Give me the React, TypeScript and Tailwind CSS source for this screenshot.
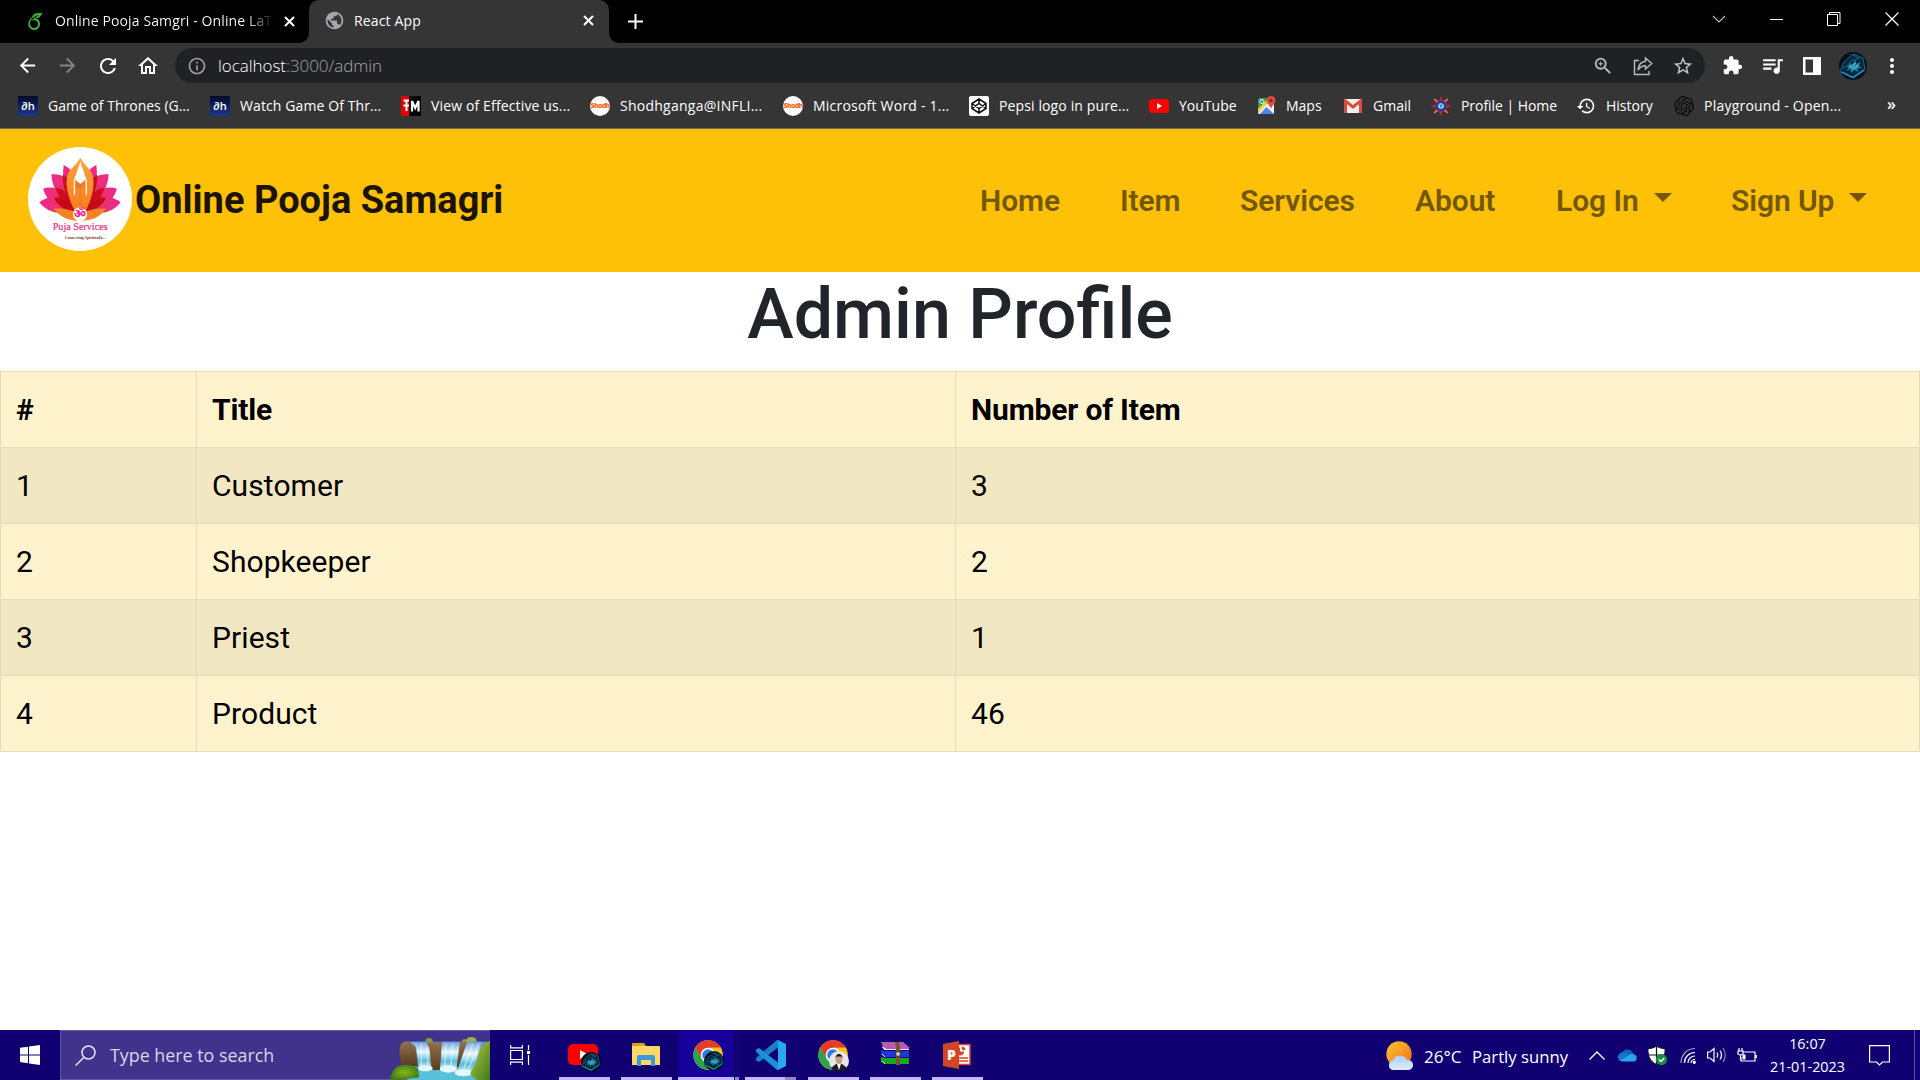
import React from "react";
import {
  MdArrowBack,
  MdArrowForward,
  MdRefresh,
  MdOutlineHome,
  MdInfoOutline,
  MdZoomIn,
  MdStarBorder,
  MdExtension,
  MdQueueMusic,
  MdMoreVert,
  MdHistory,
  MdPublic,
} from "react-icons/md";
import { SiOverleaf, SiOpenai } from "react-icons/si";

/* ---------- small drawings ---------- */

function Cross({ size = 11, width = 2 }: { size?: number; width?: number }) {
  return (
    <svg width={size} height={size} viewBox="0 0 11 11" stroke="#fff" strokeWidth={width} fill="none">
      <path d="M1 1L10 10M10 1L1 10" />
    </svg>
  );
}

function WolfAvatar({ size }: { size: number }) {
  return (
    <svg width={size} height={size} viewBox="0 0 28 28">
      <circle cx="14" cy="14" r="14" fill="#04101c" />
      <path d="M14 2L24 6L26 18L14 26L1 20L5 10Z" fill="#06263a" stroke="#117ea6" strokeWidth=".8" />
      <path d="M14 3L20 6L12 9L8 14L4 16" fill="none" stroke="#0e6c90" strokeWidth="1" />
      <path d="M8 15L12 11L13 13L17 8L17 12L22 10L19 14L23 15L18 17L20 20L15 18L12 21L12 17L7 19L10 16Z" fill="#1c86ab" />
      <path d="M10 15L14 14L16 11M13 17L17 15L20 13" fill="none" stroke="#7fd3e8" strokeWidth=".8" />
      <path d="M3 20L14 25.500L25 18" fill="none" stroke="#1aa6d4" strokeWidth="1.200" />
    </svg>
  );
}

function ChromeLogo() {
  return (
    <svg width="30" height="30" viewBox="0 0 48 48">
      <circle cx="24" cy="24" r="23.5" fill="#fbc116" />
      <path d="M3.6 12.3A23.5 23.5 0 0 1 44.4 12.3L24 12.3L13.9 29.8Z" fill="#e33b2e" />
      <path d="M3.6 12.3L13.9 29.8L34.1 29.8L24 47.5A23.5 23.5 0 0 1 3.6 12.3Z" fill="#2ba24c" />
      <path d="M44.4 12.3L24 12.3L34.1 29.8L24 47.5A23.5 23.5 0 0 0 44.4 12.3Z" fill="#fbc116" />
      <circle cx="24" cy="24" r="11.7" fill="#fff" />
      <circle cx="24" cy="24" r="9.2" fill="#2d7de9" />
    </svg>
  );
}

function DhIcon() {
  return (
    <span className="flex h-5 w-5 items-center justify-center bg-gradient-to-b from-[#040a2a] to-[#1c3b8c] text-[11px] font-semibold leading-none text-white">
      ∂h
    </span>
  );
}

function JmIcon() {
  return (
    <svg width="20" height="20" viewBox="0 0 20 20">
      <rect width="20" height="20" fill="#000" />
      <rect width="8" height="20" fill="#e30000" />
      <path d="M2.500 4.500H8M5.500 4.500V15M2.500 9.500H8" stroke="#fff" strokeWidth="2" fill="none" />
      <path d="M11 15.500V5L14.200 12L17.500 5V15.500" stroke="#fff" strokeWidth="2.200" fill="none" />
    </svg>
  );
}

function ShodhIcon() {
  return (
    <span className="flex h-5 w-5 items-center justify-center rounded-full bg-white text-[7px] font-extrabold leading-none tracking-[-0.7px] text-[#ee6a1f]">
      Shodh
    </span>
  );
}

function CodepenIcon() {
  return (
    <svg width="20" height="20" viewBox="0 0 20 20" fill="none" stroke="#111" strokeWidth="1.5">
      <rect width="20" height="20" rx="2" fill="#fff" stroke="none" />
      <path d="M10 3L17 7.500V12.500L10 17L3 12.500V7.500ZM10 3V7.500M10 12.500V17M3 7.500L10 12.500L17 7.500M3 12.500L10 7.500L17 12.500" />
    </svg>
  );
}

function YoutubeIcon() {
  return (
    <svg width="20" height="14" viewBox="0 0 20 14">
      <rect width="20" height="14" rx="3.500" fill="#f00" />
      <path d="M8 4V10L13 7Z" fill="#fff" />
    </svg>
  );
}

function MapsIcon() {
  return (
    <svg width="20" height="20" viewBox="0 0 20 20">
      <rect x="2" y="2" width="16" height="16" rx="1.500" fill="#2da15a" />
      <path d="M2 17L14 4L18 8V18H3Z" fill="#f1f1f1" />
      <path d="M2 13L11 4L13 6L2 17Z" fill="#f8cf3c" />
      <path d="M4 18L10.500 11L18 18Z" fill="#4a86ee" />
      <path d="M15 0A4.500 4.500 0 0 1 19.500 4.500C19.500 8 15.700 9 15 13C14.300 9 10.500 8 10.500 4.500A4.500 4.500 0 0 1 15 0Z" fill="#dd4b3e" />
      <circle cx="15" cy="4.500" r="1.600" fill="#7c2720" />
      <circle cx="6" cy="5.500" r="2" stroke="#fff" fill="none" />
    </svg>
  );
}

function GmailIcon() {
  return (
    <svg width="20" height="16" viewBox="0 0 20 16">
      <rect x="1" y="1" width="18" height="14" rx="1.500" fill="#f1f1f1" />
      <path d="M2.500 15V3L10 9L17.500 3V15" fill="none" stroke="#dd4b3e" strokeWidth="3" />
    </svg>
  );
}

function ProfileIcon() {
  return (
    <svg width="20" height="20" viewBox="0 0 20 20">
      <path d="M10 0L12 5L17 3L15 8L20 10L15 12L17 17L12 15L10 20L8 15L3 17L5 12L0 10L5 8L3 3L8 5Z" fill="#c8282d" />
      <path d="M3 3L7 6M17 3L13 6M3 17L7 14M17 17L13 14" stroke="#f0852c" strokeWidth="1.500" />
      <circle cx="10" cy="10" r="5.500" fill="#1e3aa8" />
      <circle cx="10" cy="10" r="2.800" fill="#cfe0e6" />
      <path d="M8 8.500H12L10 12.500Z" fill="#2c8b9c" />
    </svg>
  );
}

function ShareIcon() {
  return (
    <svg width="20" height="20" viewBox="0 0 20 20" fill="none" stroke="#b9bbbe" strokeWidth="1.400">
      <path d="M6 4.500H1.500V18.500H16V15" />
      <path d="M12.500 2L18.800 7.500L12.500 13V9.800C9 9.800 7 11 5 14C5.400 9.500 7.800 5.800 12.500 5.200Z" />
    </svg>
  );
}

/* ---------- browser chrome ---------- */

function TabStrip() {
  return (
    <div className="flex h-[43px] bg-black text-[14px] text-white">
      <div className="flex h-[42px] w-[309px] items-center pl-[27px]">
        <SiOverleaf size={17} color="#45a83c" />
        <span className="mb-[2px] ml-[11px] w-[218px] whitespace-nowrap bg-gradient-to-r from-white from-88% to-transparent bg-clip-text tracking-[0.12px] text-transparent">
          Online Pooja Samgri - Online LaT
        </span>
        <span className="ml-[11px]">
          <Cross />
        </span>
      </div>
      <div className="relative flex w-[300px] items-center rounded-t-[10px] bg-[#353535] pl-[15px] pb-[2px]">
        <svg className="absolute bottom-0 left-[-10px]" width="10" height="10" viewBox="0 0 10 10">
          <path d="M10 0V10H0A10 10 0 0 0 10 0Z" fill="#353535" />
        </svg>
        <svg className="absolute bottom-0 right-[-10px]" width="10" height="10" viewBox="0 0 10 10">
          <path d="M0 0V10H10A10 10 0 0 1 0 0Z" fill="#353535" />
        </svg>
        <MdPublic size={21} color="#a4a8ad" />
        <span className="mb-px ml-[9px] w-[229px] tracking-[0.15px]">React App</span>
        <Cross />
      </div>
      <div className="flex flex-1 items-center pb-[1px] pl-[19px]">
        <svg width="15" height="15" viewBox="0 0 15 15" stroke="#fff" strokeWidth="2">
          <path d="M7.500 0V15M0 7.500H15" />
        </svg>
      </div>
      <div className="flex h-[38px] items-center">
        <svg width="14" height="8" viewBox="0 0 14 8" fill="none" stroke="#bbb" strokeWidth="1.200">
          <path d="M1 1L7 7L13 1" />
        </svg>
        <span className="ml-[44px] h-px w-[13px] bg-white" />
        <svg className="ml-[44px]" width="14" height="14" viewBox="0 0 14 14" fill="none" stroke="#fff">
          <path d="M.5 2.500H10.500V13.500H.5ZM2.500 2.500V.5H13V11.500H10.500" />
        </svg>
        <svg className="ml-[44px] mr-[21px]" width="14" height="14" viewBox="0 0 14 14" fill="none" stroke="#fff" strokeWidth="1.200">
          <path d="M.5 .5L13.500 13.500M13.500 .5L.5 13.500" />
        </svg>
      </div>
    </div>
  );
}

function Toolbar() {
  return (
    <div className="flex h-[45px] items-center bg-[#353535] text-white">
      <MdArrowBack className="ml-[16px]" size={23} />
      <MdArrowForward className="ml-[17px]" size={23} color="#858585" />
      <MdRefresh className="ml-[17px]" size={24} />
      <MdOutlineHome className="ml-[16px]" size={24} />
      <div className="ml-[15px] flex h-[35px] w-[1530px] items-center rounded-full bg-[#202124] pl-[12px]">
        <MdInfoOutline size={20} color="#9aa0a6" />
        <span className="ml-[11px] flex-1 text-[17px] font-light tracking-[-0.05px] text-[#a0a4a9]">
          <span className="text-white">localhost</span>:3000/admin
        </span>
        <MdZoomIn size={22} color="#b9bbbe" />
        <span className="ml-[19px]">
          <ShareIcon />
        </span>
        <MdStarBorder className="ml-[19px] mr-[11px]" size={22} color="#c4c7ca" />
      </div>
      <MdExtension className="ml-[17px]" size={21} />
      <MdQueueMusic className="ml-[17px]" size={25} />
      <svg className="ml-[18px]" width="18" height="18" viewBox="0 0 18 18">
        <path d="M0 0H18V18H0ZM2.500 2.500V15.500H10V2.500Z" fill="#fff" fillRule="evenodd" />
      </svg>
      <span className="ml-[18px]">
        <WolfAvatar size={28} />
      </span>
      <MdMoreVert className="ml-[13px]" size={24} />
    </div>
  );
}

function Bookmark({ icon, label, className }: { icon: React.ReactNode; label: string; className: string }) {
  return (
    <div className={"flex shrink-0 items-center whitespace-nowrap " + className}>
      <span className="mr-[10px] flex h-5 w-5 items-center justify-center">{icon}</span>
      {label}
    </div>
  );
}

function BookmarkBar() {
  return (
    <div className="flex h-[41px] border-b border-[#6b6b6b] bg-[#353535] pl-[18px] text-[14px] text-white">
      <Bookmark className="mb-[5px] w-[192px]" icon={<DhIcon />} label="Game of Thrones (G..." />
      <Bookmark className="mb-[5px] w-[191px] tracking-[0.1px]" icon={<DhIcon />} label="Watch Game Of Thr..." />
      <Bookmark className="mb-[5px] w-[189px] tracking-[0.14px]" icon={<JmIcon />} label="View of Effective us..." />
      <Bookmark className="mb-[5px] w-[193px] tracking-[0.25px]" icon={<ShodhIcon />} label="Shodhganga@INFLI..." />
      <Bookmark className="mb-[5px] w-[186px] tracking-[0.22px]" icon={<ShodhIcon />} label="Microsoft Word - 1..." />
      <Bookmark className="mb-[5px] w-[180px] tracking-[0.12px]" icon={<CodepenIcon />} label="Pepsi logo in pure..." />
      <Bookmark className="mb-[5px] w-[107px]" icon={<YoutubeIcon />} label="YouTube" />
      <Bookmark className="mb-[5px] w-[87px]" icon={<MapsIcon />} label="Maps" />
      <Bookmark className="mb-[5px] w-[88px]" icon={<GmailIcon />} label="Gmail" />
      <Bookmark className="mb-[5px] w-[145px] tracking-[-0.05px]" icon={<ProfileIcon />} label="Profile | Home" />
      <Bookmark className="mb-[5px] w-[98px]" icon={<MdHistory size={20} />} label="History" />
      <Bookmark className="mb-[5px] w-[213px] tracking-[0.22px]" icon={<SiOpenai size={20} color="#0c0c0c" />} label="Playground - Open..." />
      <span className="mt-[4px] text-[16px] font-semibold">»</span>
    </div>
  );
}

/* ---------- page ---------- */

function PujaLogo() {
  return (
    <svg width="104" height="104" viewBox="23 21 312 312">
      <defs>
        <linearGradient id="petal" x1="0" x2="1">
          <stop offset="0" stopColor="#f4258f" />
          <stop offset="1" stopColor="#e0404e" />
        </linearGradient>
        <linearGradient id="hand" x1="0" x2="0" y1="0" y2="1">
          <stop offset="0" stopColor="#f9a63a" />
          <stop offset="1" stopColor="#f47a20" />
        </linearGradient>
      </defs>
      <circle cx="179" cy="177" r="156" fill="#fff" />
      {["", "translate(358 0) scale(-1 1)"].map((t) => (
        <g key={t} transform={t}>
          <path d="M130 75C152 84 170 110 172 140L165 205C135 170 124 120 130 75Z" fill="url(#petal)" />
          <path d="M93 103C125 100 152 116 160 145L165 210C122 190 96 150 93 103Z" fill="url(#petal)" />
          <path d="M68 146C105 135 142 152 165 212C118 216 82 190 68 146Z" fill="url(#petal)" />
          <path d="M57 187C90 162 132 166 168 215C130 226 82 221 57 187Z" fill="url(#petal)" />
          <path d="M128 104C145 112 160 140 165 205C140 180 126 145 128 104Z" fill="#cc0d1c" />
          <path d="M106 143C130 143 155 170 165 210C136 200 114 176 106 143Z" fill="#cc0d1c" />
          <path d="M101 174C128 168 150 185 165 212C136 212 112 199 101 174Z" fill="#c50a14" />
        </g>
      ))}
      <path d="M100 206C130 204 158 210 179 226C200 210 228 204 258 206C238 232 215 241 179 243C143 241 120 232 100 206Z" fill="#f68324" />
      <path d="M180 53C192 76 206 80 216 104C226 134 214 180 196 212L180 225L163 212C146 180 132 134 142 104C152 80 168 76 180 53Z" fill="url(#hand)" />
      <path d="M180 62C176 85 166 95 165 118L171 126L180 134L189 126L195 118C194 95 184 85 180 62Z" fill="#fff" />
      <path d="M168 122L180 132V145H166ZM192 122L180 132V145H194Z" fill="#ee7a2c" />
      <path d="M162 165V128C162 118 164 112 167 108M198 165V128C198 118 196 112 193 108" fill="none" stroke="#fff" strokeWidth="3.500" />
      <path d="M180 130V205" stroke="#e4691c" strokeWidth="1.500" />
      <circle cx="179" cy="223" r="21" fill="#fff" />
      <text x="179" y="235" textAnchor="middle" fontSize="36" fontWeight="700" fill="#e5257f" fontFamily="'Noto Sans', 'Noto Sans Devanagari', sans-serif">
        ॐ
      </text>
      <text x="97" y="271" textLength="165" lengthAdjust="spacingAndGlyphs" fontSize="28" fill="#ea2a7b" stroke="#ea2a7b" strokeWidth=".5" fontFamily="'Liberation Serif', serif">
        Puja Services
      </text>
      <text x="133" y="297" textLength="122" lengthAdjust="spacingAndGlyphs" fontSize="13" fontWeight="700" fill="#8c3a26" fontFamily="'Liberation Serif', serif">
        Connecting Spiritually...
      </text>
    </svg>
  );
}

function Caret() {
  return <span className="ml-[15px] mb-[6px] inline-block border-x-[9px] border-t-[9px] border-x-transparent border-t-[#735703]" />;
}

function NavBar() {
  return (
    <nav className="flex h-[143px] items-center bg-[#ffc107] pl-[28px] font-[Roboto,sans-serif]">
      <div className="mb-[3px]">
        <PujaLogo />
      </div>
      <span className="ml-[3px] text-[38px] font-bold text-[#1a1401]">Online Pooja Samagri</span>
      <div className="ml-auto flex h-full items-center whitespace-nowrap text-[30px] font-semibold tracking-[-0.08px] text-[#735703]">
        <span className="w-[140px]">Home</span>
        <span className="w-[120px]">Item</span>
        <span className="w-[175px]">Services</span>
        <span className="w-[141px]">About</span>
        <span className="flex w-[175px] items-center">
          Log In
          <Caret />
        </span>
        <span className="flex w-[189px] items-center">
          Sign Up
          <Caret />
        </span>
      </div>
    </nav>
  );
}

const rows = [
  ["1", "Customer", "3"],
  ["2", "Shopkeeper", "2"],
  ["3", "Priest", "1"],
  ["4", "Product", "46"],
];

function AdminTable() {
  return (
    <table className="w-full table-fixed border-collapse text-left font-[Roboto,sans-serif] text-[30px] text-black">
      <colgroup>
        <col className="w-[196px]" />
        <col className="w-[759px]" />
        <col />
      </colgroup>
      <thead>
        <tr className="h-[76px] bg-[#fff3cd]">
          {["#", "Title", "Number of Item"].map((h) => (
            <th key={h} className="border border-[#e6dbb9] px-[15px] font-bold tracking-[-0.15px]">
              {h}
            </th>
          ))}
        </tr>
      </thead>
      <tbody>
        {rows.map((r) => (
          <tr key={r[0]} className="h-[76px] bg-[#fff3cd] odd:bg-[#f2e7c3]">
            {r.map((c, i) => (
              <td key={i} className="border border-[#e6dbb9] px-[15px] tracking-[0.08px]">
                {c}
              </td>
            ))}
          </tr>
        ))}
      </tbody>
    </table>
  );
}

/* ---------- taskbar ---------- */

function Waterfall() {
  return (
    <svg width="100" height="45" viewBox="30 21 300 135">
      <defs>
        <linearGradient id="fall" x1="0" x2="0" y1="0" y2="1">
          <stop offset="0" stopColor="#6aa0dc" />
          <stop offset=".35" stopColor="#eaf7ff" />
          <stop offset=".65" stopColor="#59bcd9" />
          <stop offset="1" stopColor="#f4fcff" />
        </linearGradient>
        <linearGradient id="rock" x1="0" x2="0" y1="0" y2="1">
          <stop offset="0" stopColor="#94714d" />
          <stop offset="1" stopColor="#573a1f" />
        </linearGradient>
        <radialGradient id="bush">
          <stop offset="0" stopColor="#86b81a" />
          <stop offset="1" stopColor="#467d14" />
        </radialGradient>
        <linearGradient id="hill" x1="0" x2="1" y1="0" y2="1">
          <stop offset="0" stopColor="#c0c84a" />
          <stop offset="1" stopColor="#3b7a16" />
        </linearGradient>
      </defs>
      <circle cx="147" cy="41" r="11" fill="#8a9a3c" />
      <circle cx="253" cy="41" r="8" fill="#8a9a3c" />
      <ellipse cx="274" cy="39" rx="16" ry="12" fill="#a3ac48" />
      <path d="M70 41H325L300 130H80Z" fill="#5b93cf" />
      <path d="M62 50C66 40 80 39 90 42L106 52L114 115L66 112C58 90 56 68 62 50Z" fill="url(#rock)" />
      <path d="M133 44L187 42L180 128H158Z" fill="url(#rock)" />
      <path d="M236 42H262L235 118L222 112Z" fill="url(#rock)" />
      <path d="M90 41H138L148 60L155 128H118L108 58Z" fill="url(#fall)" />
      <path d="M186 41H240L228 132H180Z" fill="url(#fall)" />
      <path d="M262 41H306L274 145H226Z" fill="url(#fall)" />
      <path d="M124 48V120M140 60L144 118M198 48L194 125M218 48L212 125M278 48L248 132M296 48L264 128" stroke="#fff" strokeWidth="4" opacity=".5" fill="none" />
      <path d="M80 156L116 122C150 132 180 120 222 128L300 150V156Z" fill="#56c1d8" />
      <ellipse cx="136" cy="121" rx="22" ry="9" fill="#e6f8fc" />
      <ellipse cx="205" cy="123" rx="26" ry="11" fill="#e6f8fc" />
      <ellipse cx="250" cy="134" rx="26" ry="11" fill="#e6f8fc" />
      <path d="M30 156C36 130 46 114 64 112C90 108 108 114 114 124L118 148L60 156Z" fill="url(#bush)" />
      <path d="M330 38C306 46 296 66 292 92C284 120 268 130 272 140L290 156H330Z" fill="url(#hill)" />
    </svg>
  );
}

function TaskApp({ children, width, extra = "" }: { children: React.ReactNode; width: string; extra?: string }) {
  return (
    <div className={"flex h-full flex-col items-center justify-between " + width}>
      <span className="flex flex-1 items-center pt-[3px]">{children}</span>
      <span className={"h-[3px] bg-[#c4b5ff] " + (extra || "w-[51px]")} />
    </div>
  );
}

function TaskApps() {
  return (
    <div className="ml-[23px] flex h-full">
      <TaskApp width="w-[62px]">
        <span className="relative block h-[30px] w-[32px]">
          <svg className="mt-[4px]" width="31" height="22" viewBox="0 0 31 22">
            <rect width="30" height="21" rx="5" fill="#f00" />
            <path d="M12 6V15L20 10.500Z" fill="#fff" />
          </svg>
          <span className="absolute -bottom-[2px] -right-[1px]">
            <WolfAvatar size={20} />
          </span>
        </span>
      </TaskApp>
      <TaskApp width="w-[62px]">
        <svg width="28" height="24" viewBox="0 0 28 24">
          <path d="M0 1Q0 0 1 0H12L14 3H0Z" fill="#e0a010" />
          <path d="M0 3H27Q28 3 28 4V22H0Z" fill="#ffd767" />
          <path d="M5 23V14Q5 12 7 12H21Q23 12 23 14V23H19V17H9V23Z" fill="#3d97d8" />
        </svg>
      </TaskApp>
      <div className="ml-[1px] flex bg-[#17009a]">
        <TaskApp width="w-[56px]" extra="w-[56px]">
          <span className="relative ml-[4px] block h-[30px] w-[30px]">
            <ChromeLogo />
            <span className="absolute -bottom-[1px] -right-[1px]">
              <WolfAvatar size={20} />
            </span>
          </span>
        </TaskApp>
      </div>
      <div className="flex w-[5px] flex-col justify-end border-l border-[#0a0050] bg-[#17007f]">
        <span className="h-[3px] bg-[#9386c4]" />
      </div>
      <div className="ml-[6px] flex">
        <div className="flex w-[51px] flex-col items-center justify-between">
          <svg className="mt-[10px]" width="30" height="30" viewBox="0 0 30 30">
            <path d="M22 7.500L3 22L0 20.500V18L21 0L22 0Z" fill="#1a7fc4" />
            <path d="M22 22.500L3 8L0 9.500V12L21 30L22 30Z" fill="#1c8fd8" />
            <path d="M22 0L30 4V26L22 30Z" fill="#2ba9f0" />
          </svg>
          <div className="flex h-[3px] w-[51px]">
            <span className="w-[40px] bg-[#c4b5ff]" />
            <span className="w-[11px] bg-[#9386c4]" />
          </div>
        </div>
      </div>
      <div className="ml-[6px] flex">
        <TaskApp width="w-[62px]">
          <span className="relative block h-[30px] w-[30px]">
            <ChromeLogo />
            <svg className="absolute -bottom-[1px] -right-[1px]" width="20" height="20" viewBox="0 0 20 20">
              <circle cx="10" cy="10" r="10" fill="#e4e6e8" />
              <path d="M2 17L7 13H13L18 17A10 10 0 0 1 2 17Z" fill="#1b1b22" />
              <path d="M8 13H12L10 19Z" fill="#fff" />
              <ellipse cx="10" cy="8.500" rx="3.300" ry="4.500" fill="#c99b80" />
              <path d="M6.500 7.500C6 1.500 14 1.500 13.500 7.500L12.500 5.500H7.500Z" fill="#17120f" />
            </svg>
          </span>
        </TaskApp>
        <TaskApp width="w-[62px]">
          <svg className="mb-[4px]" width="28" height="23" viewBox="0 0 28 23">
            <path d="M0 0H22L28 5V8H4Z" fill="#b65bb0" />
            <path d="M1 3L5 7H28V8H4Z" fill="#eee" />
            <path d="M0 8L4 9H28V15H4L0 13Z" fill="#2135d8" />
            <path d="M0 15L4 16H28V22H4L0 20Z" fill="#16a81e" />
            <path d="M1 5L4 8M1 12L4 15M1 19L4 22" stroke="#ddd" />
            <path d="M14 0H18L19 5V23H15V5Z" fill="#7a5330" />
            <circle cx="17" cy="12" r="2.500" fill="#ccc" stroke="#3b2a18" />
          </svg>
        </TaskApp>
        <TaskApp width="w-[62px]">
          <svg width="28" height="28" viewBox="0 0 28 28">
            <rect x="12" y="3.500" width="15" height="20" fill="#fff" stroke="#d24625" strokeWidth="1.500" />
            <path d="M17 6.500A4 4 0 1 0 21 10.500H17Z" fill="#d24625" />
            <path d="M19 5.500A4 4 0 0 1 22.500 9H19Z" fill="#d24625" />
            <path d="M16 17H25M16 20H25" stroke="#d24625" strokeWidth="1.500" />
            <path d="M0 3L16 0V28L0 25Z" fill="#d24625" />
            <text x="4" y="19" fontSize="14" fontWeight="800" fill="#fff" fontFamily="'Open Sans', sans-serif">
              P
            </text>
          </svg>
        </TaskApp>
      </div>
    </div>
  );
}

function Tray() {
  return (
    <div className="ml-auto flex h-full items-center text-white">
      <svg className="mt-[2px]" width="28" height="30" viewBox="0 0 28 30">
        <defs>
          <linearGradient id="sun" x1="0" x2="1" y1="0" y2="1">
            <stop offset="0" stopColor="#fcc62c" />
            <stop offset="1" stopColor="#ee6d1b" />
          </linearGradient>
          <linearGradient id="cloud" x1="0" x2="0" y1="0" y2="1">
            <stop offset="0" stopColor="#a8cdfb" />
            <stop offset="1" stopColor="#e3edfd" />
          </linearGradient>
        </defs>
        <circle cx="13" cy="13" r="12.700" fill="url(#sun)" />
        <path d="M7 29A4.800 4.800 0 0 1 7 19.500A7.500 7.500 0 0 1 21 19A5 5 0 0 1 23 29Z" fill="url(#cloud)" />
      </svg>
      <span className="ml-[10px] mt-[3px] w-[48px] whitespace-nowrap text-[17px]">26°C</span>
      <span className="mt-[3px] w-[117px] whitespace-nowrap text-[16.700px]">Partly sunny</span>
      <svg width="16" height="9" viewBox="0 0 16 9" fill="none" stroke="#fff" strokeWidth="1.300">
        <path d="M.5 8.500L8 1L15.500 8.500" />
      </svg>
      <svg className="ml-[12px]" width="20" height="14" viewBox="0 0 20 14">
        <path d="M5 5A6 6 0 0 1 15.500 4L18 8L4 12Z" fill="#0b62b8" />
        <path d="M4 13A4 4 0 0 1 3 5.500A5 5 0 0 1 10 6L18 13Z" fill="#1277d0" />
        <path d="M3 12.500L12 7A5 5 0 0 1 17 6.500A3.600 3.600 0 0 1 17 13.500H5Z" fill="#2aa5ec" />
      </svg>
      <svg className="ml-[10px]" width="21" height="21" viewBox="0 0 21 21">
        <path d="M9.500 1C12 3 15 3.500 18 3.500C18.500 12 15 17 9.500 19.500C4 17 .5 12 1 3.500C4 3.500 7 3 9.500 1Z" fill="#fff" stroke="#111" />
        <path d="M9.500 1V19M1 10H18" stroke="#111" strokeWidth="1.200" />
        <circle cx="14.500" cy="14.500" r="5.500" fill="#149144" />
        <path d="M12 14.500L14 16.500L17.200 13" stroke="#fff" strokeWidth="1.400" fill="none" />
      </svg>
      <svg className="ml-[12px]" width="16" height="17" viewBox="0 0 16 17" fill="none" stroke="#fff" strokeWidth="1.200">
        <path d="M1 16C1 8 7 1.500 15 1.500" opacity=".6" />
        <path d="M4.500 16C4.500 10 9 5.500 15 5.500M8 16C8 12 11 9 15 9" />
        <path d="M11 16C11 14 13 12.500 15 12.500" />
        <circle cx="14.300" cy="15.300" r="1" fill="#fff" />
      </svg>
      <svg className="ml-[11px]" width="20" height="18" viewBox="0 0 20 18" fill="none" stroke="#fff" strokeWidth="1.200">
        <path d="M.6 6H3L7 2.500V15.500L3 12H.6Z" />
        <path d="M10 6.500Q11.500 9 10 11.500M13 4.500Q16 9 13 13.500" />
        <path d="M16 2Q20.500 9 16 16" opacity=".5" />
      </svg>
      <svg className="ml-[10px]" width="20" height="15" viewBox="0 0 20 15" fill="none" stroke="#fff" strokeWidth="1.200">
        <path d="M6 4H18V13H4V9M19.300 7V10" />
        <path d="M1 3H6V6Q3.500 8 1 6ZM2 3V0M5 3V0M3.500 7V12" />
        <rect x="5.500" y="6.500" width="3" height="5" fill="#fff" stroke="none" />
      </svg>
      <div className="ml-[12px] flex w-[77px] flex-col items-center text-[14.400px] leading-[23px]">
        <span>16:07</span>
        <span className="whitespace-nowrap">21-01-2023</span>
      </div>
      <svg className="ml-[23px]" width="21" height="21" viewBox="0 0 21 21" fill="none" stroke="#fff" strokeWidth="1.200">
        <path d="M.6 .6H20.400V17H13.500L10.500 20L7.500 17H.6Z" />
      </svg>
      <span className="ml-[24px] mr-[5px] h-full w-px bg-[#5e50a8]" />
    </div>
  );
}

function Taskbar() {
  return (
    <div className="flex h-[50px] items-center bg-[#110072]">
      <svg className="ml-[20px] mr-[20px]" width="20" height="20" viewBox="0 0 20 20" fill="#fff">
        <path d="M0 2.800L8 1.700V9.400H0ZM9 1.500L20 0V9.400H9ZM0 10.500H8V18.200L0 17.100ZM9 10.500H20V20L9 18.400Z" />
      </svg>
      <div className="flex h-full w-[430px] items-center border border-r-0 border-[#6358a6] bg-[#41338c] pl-[14px]">
        <svg width="21" height="21" viewBox="0 0 21 21" fill="none" stroke="#e8e5f5" strokeWidth="1.500">
          <circle cx="13.500" cy="7.500" r="6.500" />
          <path d="M9 12.200L.6 20.500" />
        </svg>
        <span className="ml-[14px] flex-1 text-[17.850px] text-[#d9d6ea]">Type here to search</span>
        <span className="mt-[4px]">
          <Waterfall />
        </span>
      </div>
      <svg className="ml-[20px]" width="20" height="20" viewBox="0 0 20 20" fill="none" stroke="#fff" strokeWidth="1.200">
        <path d="M.6 0V2.800H12.400V0M.6 20V17.200H12.400V20M.6 5.500H12.400V14.500H.6ZM18.500 0V5M18.500 10V20" />
        <rect x="17" y="6" width="3" height="3" fill="#fff" stroke="none" />
      </svg>
      <TaskApps />
      <Tray />
    </div>
  );
}

export default function App() {
  return (
    <div className="flex h-[1080px] w-[1920px] flex-col overflow-hidden bg-white font-['Open_Sans',sans-serif]">
      <TabStrip />
      <Toolbar />
      <BookmarkBar />
      <main className="flex-1">
        <NavBar />
        <h1 className="h-[99px] text-center font-[Roboto,sans-serif] text-[70px] font-medium leading-[84px] text-[#212529]">Admin Profile</h1>
        <AdminTable />
      </main>
      <Taskbar />
    </div>
  );
}
